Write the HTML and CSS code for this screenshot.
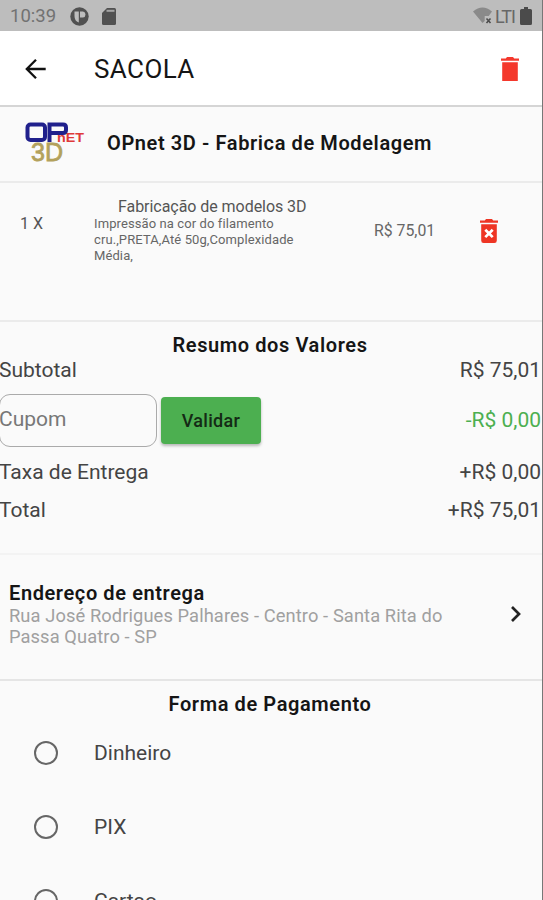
FILE: index.html
```html
<!DOCTYPE html>
<html lang="pt-BR">
<head>
<meta charset="utf-8">
<title>Sacola</title>
<link rel="stylesheet" href="styles.css">
</head>
<body>
<div class="screen">
  <header class="status">
    <span class="clock">10:39</span>
    <svg class="status-app" width="19" height="19" viewBox="0 0 19 19"><circle cx="9.5" cy="9.5" r="9.2" fill="#515151"/><path d="M4.5 4.5h4.3v11Q4.5 14 4.5 9zM10 4.5h3q2.5.5 2.5 3t-2.5 3h-3z" fill="#bdbdbd"/></svg>
    <svg class="status-card" width="14" height="17" viewBox="0 0 14 17"><path d="M5 0h7.5Q14 0 14 1.5v14q0 1.5-1.5 1.5h-11Q0 17 0 15.5V5z" fill="#515151"/><path d="M4.5 2.8h8" stroke="#a5a5a5" stroke-width="2"/></svg>
    <span class="spacer"></span>
    <svg class="wifi" width="20" height="18" viewBox="0 0 20 18"><path d="M0 4.5Q9.5-3.5 19 4.5l-3.3 4.4h-4v5.2L9.5 16z" fill="#8a8a8a"/><path d="M13.5 11.5l4 4.5m0-4.5l-4 4.5" stroke="#4c4c4c" stroke-width="1.6"/></svg>
    <span class="network">LTI</span>
    <svg class="battery" width="12" height="18" viewBox="0 0 12 18"><path d="M4 0h4v2h2.5Q12 2 12 3.5v13q0 1.5-1.5 1.5h-9Q0 18 0 16.5v-13Q0 2 1.5 2H4z" fill="#4b4b4b"/></svg>
  </header>

  <nav class="appbar">
    <svg class="back" width="22" height="22" viewBox="0 0 22 22"><path d="M20.7 11H2M11 1.7L1.8 11l9.2 9.3" fill="none" stroke="#111" stroke-width="2.3"/></svg>
    <h1>SACOLA</h1>
    <svg class="trash" width="18" height="24" viewBox="0 0 18 24"><path d="M0 1.4h4.8L6 0h6l1.2 1.4H18v2.4H0zM1.2 5.2h15.6V24H1.2z" fill="#f4382c"/></svg>
  </nav>

  <section class="store">
    <svg class="logo" width="60" height="42" viewBox="0 0 60 42">
      <text class="logo-3d" x="6" y="38.5" textLength="32" lengthAdjust="spacingAndGlyphs">3D</text>
      <g fill="none" stroke="#20208c" stroke-width="4"><rect x="2.5" y="2.5" width="17.5" height="15.5" rx="3"/><path d="M24.5 20V2.5h13.5q3 0 3 3v2.5q0 3-3 3H25"/></g>
      <text class="logo-net" x="32" y="19.5" textLength="27" lengthAdjust="spacingAndGlyphs">nET</text>
    </svg>
    <h2>OPnet 3D - Fabrica de Modelagem</h2>
  </section>

  <section class="item">
    <span class="qty">1 X</span>
    <div class="item-info">
      <div class="item-name">Fabricação de modelos 3D</div>
      <p>Impressão na cor do filamento<br>cru.,PRETA,Até 50g,Complexidade<br>Média,</p>
    </div>
    <span class="item-price">R$ 75,01</span>
    <svg class="remove" width="18" height="24" viewBox="0 0 18 24"><path d="M0 1.4h4.8L6 0h6l1.2 1.4H18v2.4H0zM1.2 5.2h15.6v16.3q0 2.5-2.4 2.5H3.6q-2.4 0-2.4-2.5z" fill="#ee3524"/><path d="M5.3 10.7l7.4 7.4m0-7.4l-7.4 7.4" stroke="#fff" stroke-width="2.7"/></svg>
  </section>

  <section class="summary">
    <h3>Resumo dos Valores</h3>
    <div class="row subtotal"><span>Subtotal</span><span>R$ 75,01</span></div>
    <div class="row coupon">
      <div class="field"><span>Cupom</span></div>
      <button>Validar</button>
      <span class="discount">-R$ 0,00</span>
    </div>
    <div class="row fee"><span>Taxa de Entrega</span><span>+R$ 0,00</span></div>
    <div class="row total"><span>Total</span><span>+R$ 75,01</span></div>
  </section>

  <section class="address">
    <div class="address-text">
      <h3>Endereço de entrega</h3>
      <p>Rua José Rodrigues Palhares - Centro - Santa Rita do<br>Passa Quatro - SP</p>
    </div>
    <svg class="chevron" width="12" height="18" viewBox="0 0 12 18"><path d="M2 2l7 7-7 7" fill="none" stroke="#222" stroke-width="2.7"/></svg>
  </section>

  <section class="payment">
    <h3>Forma de Pagamento</h3>
    <div class="option"><i class="radio"></i><span>Dinheiro</span></div>
    <div class="option"><i class="radio"></i><span>PIX</span></div>
    <div class="option"><i class="radio"></i><span>Cartao</span></div>
  </section>
</div>
</body>
</html>
```
FILE: styles.css
```css
* { box-sizing: border-box; }
body { margin: 0; overflow: hidden; background: #fafafa; font-family: Roboto, "Liberation Sans", sans-serif; color: #333; }
h1, h2, h3, p { margin: 0; }
svg { display: block; flex: none; }
.screen { width: 543px; height: 900px; overflow: hidden; background: #fafafa; border-right: 1px solid #777; white-space: nowrap; }
section { border-bottom: 2px solid #ebebeb; }

.status { height: 31px; display: flex; align-items: center; background: #bdbdbd; padding: 1px 10px 0 10px; }
.clock { font-size: 18.5px; color: #727272; width: 60px; }
.status-card { margin-left: 13px; }
.spacer { flex: 1; }
.network { font-size: 18px; color: #676767; margin: 0 6px 0 2px; width: 19px; letter-spacing: -1px; }

.appbar { height: 76px; display: flex; align-items: center; background: #fff; border-bottom: 2px solid #d5d5d5; padding: 1px 23px 0 25px; }
.appbar h1 { flex: 1; margin-left: 47px; font-size: 26px; line-height: 30px; font-weight: 400; color: #151515; letter-spacing: .4px; padding-top: 1px; }

.store { height: 76px; display: flex; align-items: center; padding-left: 25px; }
.logo { margin-top: -3px; overflow: visible; }
.logo-net { font: bold 12px "Liberation Sans", sans-serif; fill: #df3939; }
.logo-3d { font: 26px "Liberation Sans", sans-serif; fill: #b3a15c; stroke: #b3a15c; stroke-width: .8px; }
.store h2 { margin: -3px 0 0 22px; font-size: 20px; font-weight: 600; color: #151515; letter-spacing: .6px; }

.item { height: 139px; display: flex; align-items: flex-start; padding: 14px 0 0 20px; }
.qty { width: 74px; font-size: 16px; line-height: 20px; margin-top: 17px; color: #555; }
.item-info { width: 280px; }
.item-name { padding-left: 24px; font-size: 16px; line-height: 20px; color: #555; letter-spacing: -.05px; }
.item-info p { font-size: 13px; line-height: 16px; margin-top: -1px; color: #666; letter-spacing: .1px; }
.item-price { width: 106px; font-size: 15.8px; line-height: 20px; margin-top: 24px; color: #666; }
.remove { margin-top: 22px; }

.summary { height: 233px; padding-top: 11px; border-color: #f3f3f3; font-size: 21px; }
h3 { font-size: 20px; line-height: 24px; font-weight: 600; color: #151515; letter-spacing: .6px; }
.summary h3, .payment h3 { text-align: center; padding-right: 2px; }
.row { display: flex; align-items: center; justify-content: space-between; padding-right: 1px; line-height: 25px; color: #444; }
.row > span:first-child { margin-left: -1px; }
.subtotal { margin-top: 1px; }
.coupon { height: 53px; margin-top: 11px; justify-content: flex-start; }
.field { width: 158px; height: 53px; margin-left: -1px; border: 1.5px solid #aaa; border-radius: 11px; display: flex; align-items: center; color: #777; padding-bottom: 2px; }
.field span { margin-left: -1px; }
button { width: 100px; height: 47px; margin-left: 4px; border: 0; border-radius: 4px; background: #4caf50; box-shadow: 0 2px 3px #0004; font: 500 18px Roboto, sans-serif; color: #142a15; letter-spacing: .3px; padding: 0; }
.discount { margin-left: auto; color: #4caf50; }
.fee { margin-top: 13px; }
.total { margin-top: 13px; }

.address { height: 126px; display: flex; align-items: flex-start; justify-content: space-between; padding: 26px 20px 0 9px; border-color: #e5e5e5; }
.address p { font-size: 18.3px; line-height: 21px; color: #a0a0a0; letter-spacing: .1px; }
.chevron { margin-top: 24px; }

.payment { padding-top: 11px; border: 0; }
.option { height: 74px; display: flex; align-items: center; padding-left: 34px; font-size: 21px; color: #444; }
.radio { width: 24px; height: 24px; margin-right: 36px; border: 2.6px solid #666; border-radius: 50%; }
```
